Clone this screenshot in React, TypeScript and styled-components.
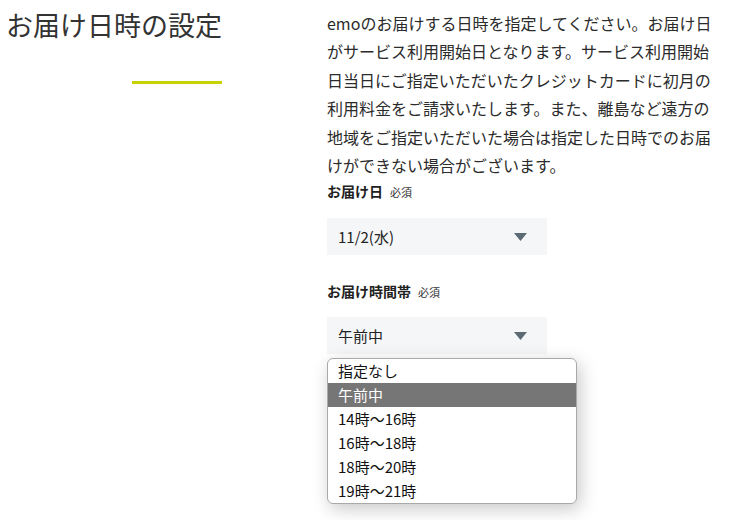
import React from "react";
import styled, { createGlobalStyle } from "styled-components";

const GlobalStyle = createGlobalStyle`
  html, body { margin: 0; padding: 0; background: #fff; }
  body {
    font-family: "Noto Sans CJK JP", "Noto Sans", sans-serif;
    color: #333;
  }
`;

const Page = styled.div`
  display: flex;
  align-items: flex-start;
  width: 740px;
  height: 520px;
  overflow: hidden;
`;

const Aside = styled.div`
  width: 216px;
  margin-left: 6px;
  padding-top: 6px;
  display: flex;
  flex-direction: column;
  align-items: flex-end;
`;

const Title = styled.h1`
  margin: 0;
  width: 100%;
  font-size: 27px;
  line-height: 38px;
  font-weight: 400;
  color: #333;
  white-space: nowrap;
`;

const Accent = styled.div`
  width: 90px;
  height: 3px;
  margin-top: 37px;
  background: #c8d200;
`;

const Main = styled.div`
  margin-left: 105px;
  width: 392px;
  display: flex;
  flex-direction: column;
  align-items: flex-start;
`;

const Lead = styled.p`
  margin: 9px 0 0;
  font-size: 16px;
  line-height: 28.4px;
  color: #2b2b2b;
`;

const Label = styled.div<{ $gap: number }>`
  margin-top: ${(p) => p.$gap}px;
  display: flex;
  align-items: baseline;
  gap: 7px;
  font-size: 14px;
  line-height: 20px;
  font-weight: 700;
  color: #222;
`;

const Required = styled.span`
  font-size: 11px;
  font-weight: 400;
  color: #333;
`;

const SelectWrap = styled.div<{ $gap: number }>`
  position: relative;
  margin-top: ${(p) => p.$gap}px;
`;

const SelectBox = styled.div`
  width: 220px;
  height: 37px;
  box-sizing: border-box;
  padding: 0 20px 0 11px;
  display: flex;
  align-items: center;
  justify-content: space-between;
  background: #f5f6f7;
  font-size: 15px;
  color: #222;
`;

const Arrow = styled.svg`
  width: 13px;
  height: 8px;
  display: block;
`;

const Menu = styled.ul`
  position: absolute;
  top: calc(100% + 4px);
  left: 0;
  width: 250px;
  margin: 0;
  padding: 0;
  list-style: none;
  box-sizing: border-box;
  background: #fff;
  border: 1px solid #a9a9a9;
  border-radius: 6px;
  overflow: hidden;
  box-shadow: 3px 5px 18px rgba(0, 0, 0, 0.22);
`;

const Option = styled.li<{ $active?: boolean }>`
  height: 24px;
  line-height: 24px;
  padding-left: 10px;
  font-size: 15px;
  color: ${(p) => (p.$active ? "#fff" : "#111")};
  background: ${(p) => (p.$active ? "#767676" : "transparent")};
`;

const ArrowIcon = () => (
  <Arrow viewBox="0 0 13 8">
    <polygon points="0,0 13,0 6.5,8" fill="#5b6a73" />
  </Arrow>
);

const times = ["指定なし", "午前中", "14時～16時", "16時～18時", "18時～20時", "19時～21時"];

export default function App() {
  return (
    <>
      <GlobalStyle />
      <Page>
        <Aside>
          <Title>お届け日時の設定</Title>
          <Accent />
        </Aside>
        <Main>
          <Lead>
            emoのお届けする日時を指定してください。お届け日がサービス利用開始日となります。サービス利用開始日当日にご指定いただいたクレジットカードに初月の利用料金をご請求いたします。また、離島など遠方の地域をご指定いただいた場合は指定した日時でのお届けができない場合がございます。
          </Lead>
          <Label $gap={2}>
            お届け日<Required>必須</Required>
          </Label>
          <SelectWrap $gap={16}>
            <SelectBox>
              <span>11/2(水)</span>
              <ArrowIcon />
            </SelectBox>
          </SelectWrap>
          <Label $gap={26}>
            お届け時間帯<Required>必須</Required>
          </Label>
          <SelectWrap $gap={15}>
            <SelectBox>
              <span>午前中</span>
              <ArrowIcon />
            </SelectBox>
            <Menu>
              {times.map((t) => (
                <Option key={t} $active={t === "午前中"}>
                  {t}
                </Option>
              ))}
            </Menu>
          </SelectWrap>
        </Main>
      </Page>
    </>
  );
}
